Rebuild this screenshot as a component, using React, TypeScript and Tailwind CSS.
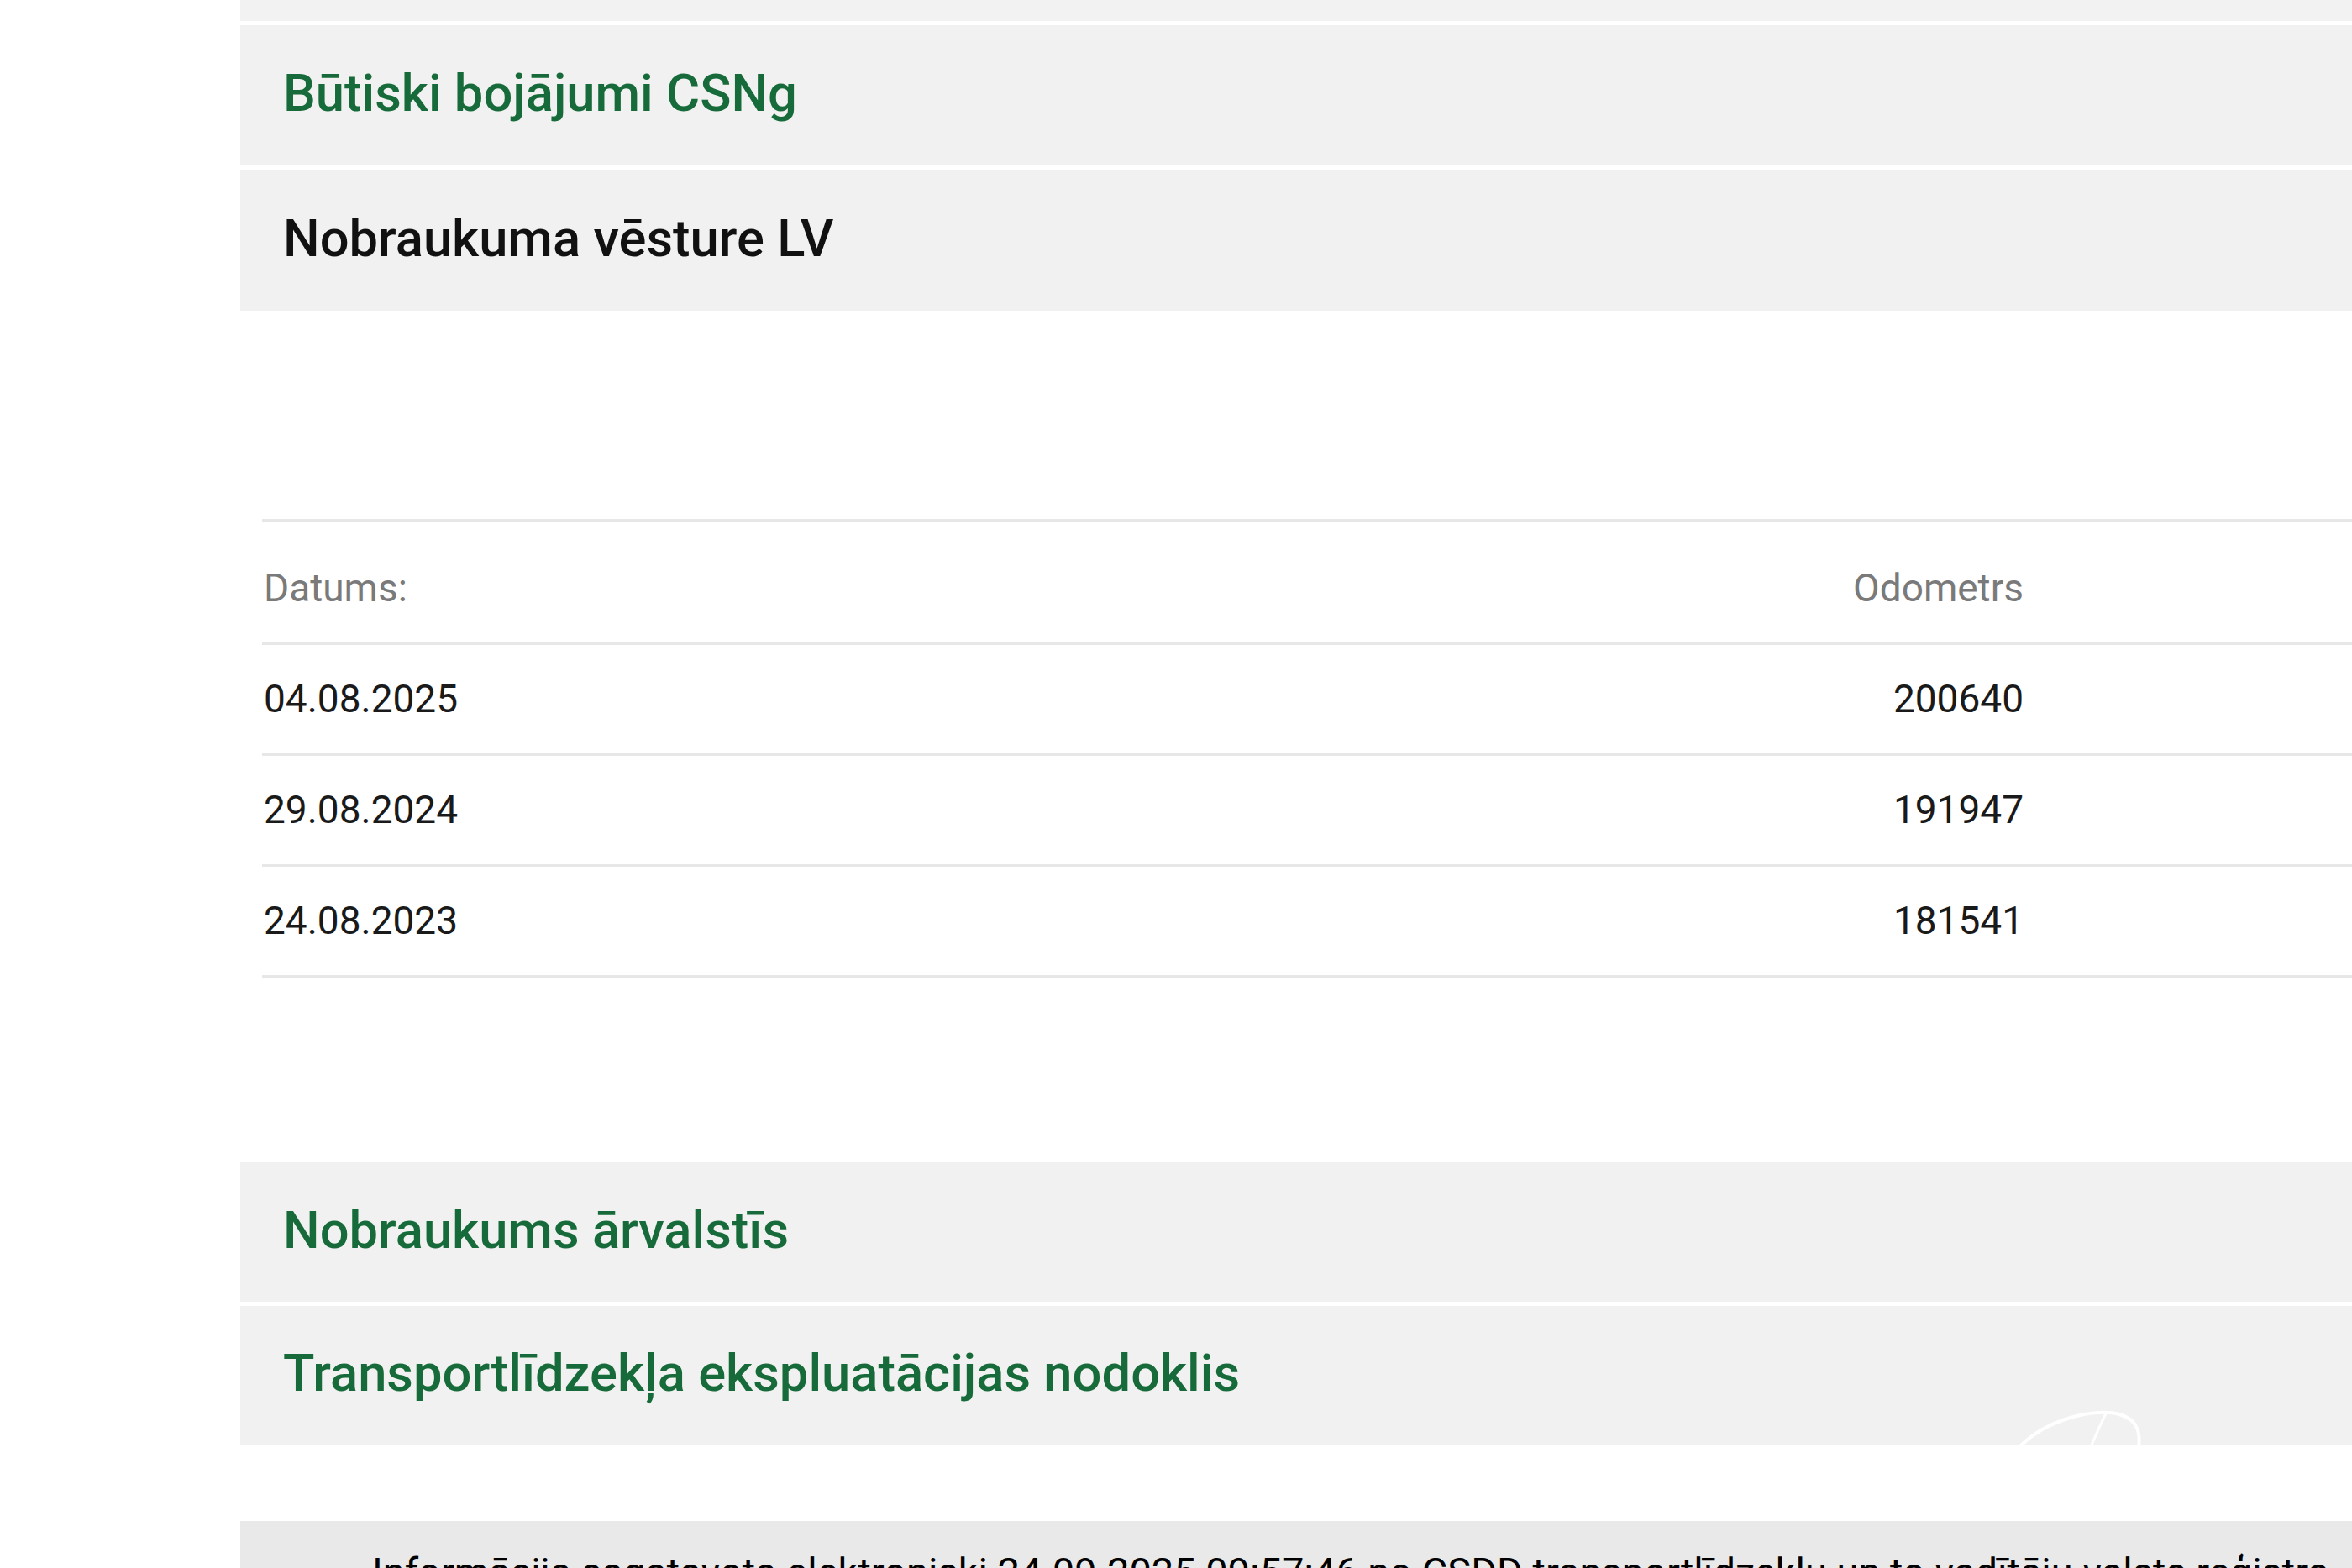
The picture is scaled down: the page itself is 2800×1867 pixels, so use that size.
const rows = [
  { date: "04.08.2025", odo: "200640" },
  { date: "29.08.2024", odo: "191947" },
  { date: "24.08.2023", odo: "181541" },
];

const Panel = ({
  title,
  green = true,
  h = "h-[166px]",
  children,
}: {
  title: string;
  green?: boolean;
  h?: string;
  children?: React.ReactNode;
}) => {
  return (
    <div className={`relative overflow-hidden bg-[#f1f1f1] ${h} flex items-center pl-[51px]`}>
      <span
        className={`text-[61.5px] font-medium leading-none -mt-[3px] ${green ? "text-[#176b3a]" : "text-[#111111]"}`}
      >
        {title}
      </span>
      {children}
    </div>
  );
};

const App = () => {
  return (
    <div className="w-[2800px] h-[1867px] overflow-hidden bg-white font-['Roboto',_'Liberation_Sans',_sans-serif]">
      <div className="ml-[286px] flex flex-col">
        <div className="h-[25px] bg-[#f2f2f2]" />
        <div className="h-[5px]" />
        <Panel title="Būtiski bojājumi CSNg" />
        <div className="h-[6px]" />
        <Panel title="Nobraukuma vēsture LV" green={false} h="h-[168px]" />

        {/* nobraukuma tabula */}
        <div className="pt-[248px] pl-[26px]">
          <div className="border-t-[3px] border-[#e7e7e7]">
            <div className="h-[147px] flex items-center pt-[14px] border-b-[3px] border-[#e7e7e7]">
              <div className="w-[2097px] flex justify-between pl-[2px] text-[46px] text-[#7a7a7a]">
                <span>Datums:</span>
                <span>Odometrs</span>
              </div>
            </div>
            {rows.map((r) => (
              <div
                key={r.date}
                className="h-[132px] flex items-center border-b-[3px] border-[#e7e7e7]"
              >
                <div className="w-[2097px] flex justify-between pl-[2px] text-[46px] text-[#1a1a1a]">
                  <span>{r.date}</span>
                  <span>{r.odo}</span>
                </div>
              </div>
            ))}
          </div>
        </div>

        <div className="h-[220px]" />
        <Panel title="Nobraukums ārvalstīs" />
        <div className="h-[5px]" />
        <Panel title="Transportlīdzekļa ekspluatācijas nodoklis" h="h-[165px]">
          <svg
            className="absolute left-[2110px] top-[122px]"
            width="190"
            height="120"
            viewBox="0 0 190 120"
            fill="none"
          >
            <path
              d="M6 48 C40 12 100 -2 130 8 C150 15 152 30 150 48"
              stroke="#ffffff"
              strokeWidth="4"
            />
            <path d="M112 4 C104 20 98 34 92 48" stroke="#ffffff" strokeWidth="3" />
          </svg>
        </Panel>

        <div className="h-[91px]" />
        <div className="h-[200px] bg-[#e9e9e9] pl-[157px] pt-[37px]">
          <p className="text-[47px] leading-none text-black whitespace-nowrap">
            Informācija sagatavota elektroniski 24.09.2025 09:57:46 no CSDD transportlīdzekļu un to
            vadītāju valsts reģistra
          </p>
        </div>
      </div>
    </div>
  );
};

export default App;
